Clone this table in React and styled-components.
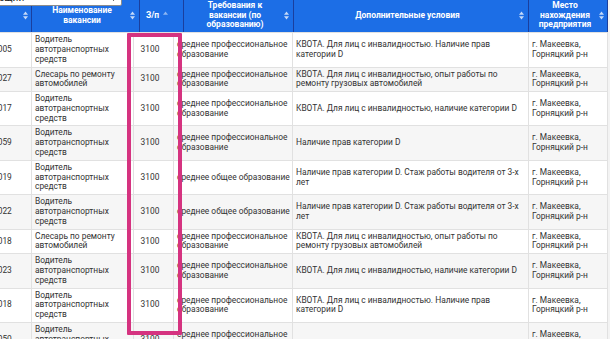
import React from "react";
import styled, { createGlobalStyle } from "styled-components";

const GlobalStyle = createGlobalStyle`
  html, body {
    margin: 0;
    padding: 0;
    background: #f3f3f3;
    overflow: hidden;
  }
  body {
    font-family: Roboto, "Liberation Sans", sans-serif;
  }
`;

const Page = styled.div`
  position: relative;
  width: 610px;
  height: 339px;
  overflow: hidden;
`;

const Scroller = styled.div`
  position: relative;
  width: 616px;
  margin-top: -1px;
  margin-left: -9px;
  background: #fff;
  border-right: 1px solid #3a3a3a;
  height: 400px;
`;

const Table = styled.table`
  width: 616px;
  table-layout: fixed;
  border-collapse: collapse;
`;

const Th = styled.th`
  background: #1c6ee6;
  color: #fff;
  font-size: 8.5px;
  font-weight: 700;
  line-height: 9.7px;
  padding: 2px ${(p) => p.$padRight || 3}px 2px 4px;
  border-left: 1px solid #1a3f9e;
  border-right: 1px solid #1a3f9e;
  vertical-align: middle;
`;

const HeadInner = styled.div`
  display: flex;
  align-items: center;
  gap: 2px;
`;

const HeadLabel = styled.span`
  flex: 1;
  text-align: center;
`;

const Td = styled.td`
  font-size: 8.4px;
  line-height: 9.8px;
  color: #333;
  padding: 2px ${(p) => p.$padRight || 2}px 2px ${(p) => (p.$tight ? 1 : 3)}px;
  border: 1px solid #e1e1e1;
  vertical-align: middle;
  text-align: ${(p) => p.$align || "left"};
`;

const Tr = styled.tr`
  &:nth-child(even) td {
    background: #f6f6f6;
  }
`;

const FilterSelect = styled.div`
  position: absolute;
  top: -9px;
  left: -10px;
  width: 141px;
  height: 16px;
  box-sizing: border-box;
  background: #fff;
  border: 1px solid #8c8c8c;
  border-radius: 2px;
  display: flex;
  align-items: center;
  justify-content: space-between;
  padding: 0 4px 0 10px;
  font-size: 10px;
  line-height: 10px;
  color: #222;
`;

const Highlight = styled.div`
  position: absolute;
  left: 127px;
  top: 33px;
  width: 55px;
  height: 302px;
  box-sizing: border-box;
  border: 4px solid #d53380;
  border-radius: 1px;
  pointer-events: none;
`;

function SortIcon({ asc }) {
  return (
    <svg width="5" height="9" viewBox="0 0 5 9" style={{ flex: "none" }}>
      <polygon
        points="0,3.8 2.5,0.6 5,3.8"
        fill={asc ? "rgba(255,255,255,0.5)" : "rgba(255,255,255,0.75)"}
      />
      {!asc && (
        <polygon points="0,5.2 2.5,8.4 5,5.2" fill="rgba(255,255,255,0.75)" />
      )}
    </svg>
  );
}

const headCols = [40, 108, 44, 110, 235, 79];
const bodyCols = [40, 102, 40, 119, 236, 79];

const heads = [
  { label: "" },
  { label: "Наименование вакансии", pad: 4 },
  { label: "З/п", asc: true, pad: 15 },
  { label: "Требования к вакансии (по образованию)", pad: 4 },
  { label: "Дополнительные условия", pad: 4 },
  { label: "Место нахождения предприятия", pad: 3 },
];

const DRIVER = "Водитель автотранспортных средств";
const FITTER = "Слесарь по ремонту автомобилей";
const PROF = "среднее профессиональное образование";
const GEN = "среднее общее образование";
const PLACE = "г. Макеевка, Горняцкий р-н";

const rows = [
  ["1005", DRIVER, PROF, "КВОТА. Для лиц с инвалидностью. Наличие прав категории D"],
  ["1027", FITTER, PROF, "КВОТА. Для лиц с инвалидностью, опыт работы по ремонту грузовых автомобилей"],
  ["1017", DRIVER, PROF, "КВОТА. Для лиц с инвалидностью, наличие категории D"],
  ["1059", DRIVER, PROF, "Наличие прав категории D"],
  ["1019", DRIVER, GEN, "Наличие прав категории D. Стаж работы водителя от 3-х лет"],
  ["1022", DRIVER, GEN, "Наличие прав категории D. Стаж работы водителя от 3-х лет"],
  ["1018", FITTER, PROF, "КВОТА. Для лиц с инвалидностью, опыт работы по ремонту грузовых автомобилей"],
  ["1023", DRIVER, PROF, "КВОТА. Для лиц с инвалидностью, наличие категории D"],
  ["1018", DRIVER, PROF, "КВОТА. Для лиц с инвалидностью. Наличие прав категории D"],
  ["1050", DRIVER, PROF, ""],
];

export default function App() {
  return (
    <Page>
      <GlobalStyle />
      <Scroller>
        <Table>
          <colgroup>
            {headCols.map((w, i) => (
              <col key={i} style={{ width: w }} />
            ))}
          </colgroup>
          <thead>
            <tr>
              {heads.map((h, i) => (
                <Th key={i} $padRight={h.pad}>
                  <HeadInner>
                    <HeadLabel>{h.label}</HeadLabel>
                    <SortIcon asc={h.asc} />
                  </HeadInner>
                </Th>
              ))}
            </tr>
          </thead>
        </Table>
        <Table>
          <colgroup>
            {bodyCols.map((w, i) => (
              <col key={i} style={{ width: w }} />
            ))}
          </colgroup>
          <tbody>
            {rows.map((r, i) => (
              <Tr key={i}>
                <Td $tight>{r[0]}</Td>
                <Td>{r[1]}</Td>
                <Td $align="center" $padRight={10}>3100</Td>
                <Td>{r[2]}</Td>
                <Td>{r[3]}</Td>
                <Td>{PLACE}</Td>
              </Tr>
            ))}
          </tbody>
        </Table>
        <FilterSelect>
          <span>Общий</span>
          <svg width="7" height="5" viewBox="0 0 7 5">
            <polygon points="0,0 7,0 3.5,5" fill="#222" />
          </svg>
        </FilterSelect>
      </Scroller>
      <Highlight />
    </Page>
  );
}
